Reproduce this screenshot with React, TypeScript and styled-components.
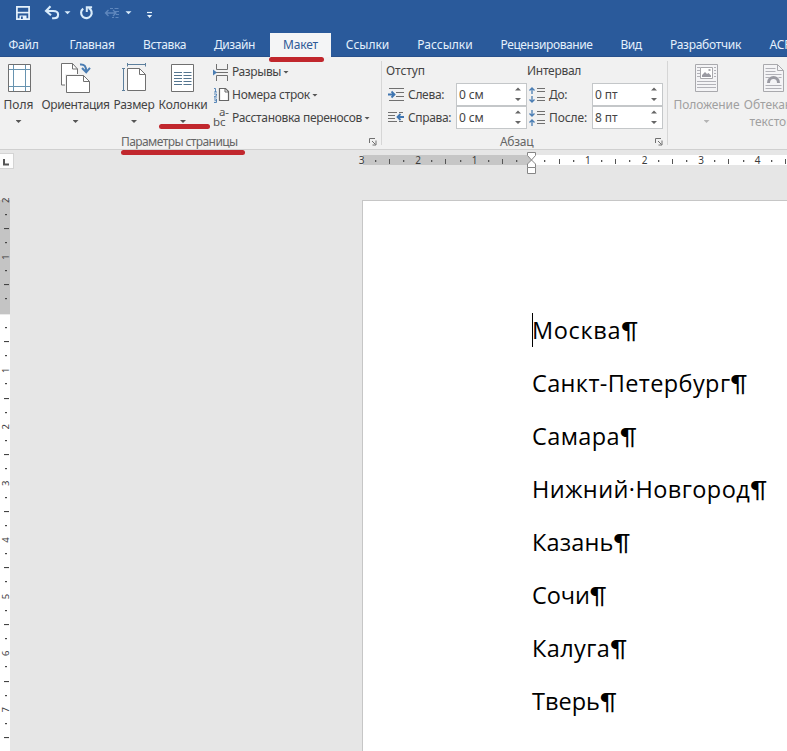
import React from "react";
import styled, { createGlobalStyle } from "styled-components";

const Global = createGlobalStyle`
  * { box-sizing: border-box; }
  body { margin: 0; overflow: hidden; background: #e6e6e6; }
  svg { display: block; flex: none; }
`;

const Window = styled.div`
  width: 787px;
  height: 751px;
  overflow: hidden;
  display: flex;
  flex-direction: column;
  background: #e6e6e6;
  color: #444;
  font: 12px/16px "Noto Sans", "Open Sans", sans-serif;
  white-space: nowrap;
`;

const QuickAccess = styled.div`
  height: 33px;
  flex: none;
  background: #2a5a9b;
`;

const TabBar = styled.nav`
  height: 24px;
  flex: none;
  display: flex;
  background: #2a5a9b;
  border-bottom: 1px solid #27508c;
`;

const Tab = styled.div<{ $w: number; $ls?: number; $pad?: number; $active?: boolean }>`
  position: relative;
  width: ${(p) => p.$w}px;
  flex: none;
  display: flex;
  justify-content: center;
  padding: 4px 0 0 ${(p) => p.$pad ?? 0}px;
  height: 24px;
  letter-spacing: ${(p) => p.$ls ?? 0}px;
  color: ${(p) => (p.$active ? "#2f5a96" : "#e4f0fc")};
  background: ${(p) => (p.$active ? "#f4f5f6" : "transparent")};
`;

const Marker = styled.i<{ $left: number; $top: number; $w: number }>`
  position: absolute;
  z-index: 2;
  left: ${(p) => p.$left}px;
  top: ${(p) => p.$top}px;
  width: ${(p) => p.$w}px;
  height: 5px;
  border-radius: 2.5px;
  background: #c1272d;
`;

const Ribbon = styled.div`
  height: 93px;
  flex: none;
  display: flex;
  background: #f1f1f1;
  border-bottom: 1px solid #d0d0d0;
`;

const Group = styled.section<{ $w: number }>`
  width: ${(p) => p.$w}px;
  flex: none;
  margin: 4px 0;
  border-right: 1px solid #d6d6d6;
  display: flex;
  flex-direction: column;
`;

const GroupBody = styled.div`
  height: 75px;
  flex: none;
  display: flex;
`;

const GroupFooter = styled.div<{ $pad: number; $ls: number }>`
  display: flex;
  justify-content: space-between;
  align-items: flex-start;
  padding: 1px 4px 0 ${(p) => p.$pad}px;
  height: 10px;
  line-height: 13px;
  color: #666;
  letter-spacing: ${(p) => p.$ls}px;
`;

const FooterName = styled.span`
  position: relative;
  margin-top: -2px;
`;

const BigButton = styled.div<{ $w: number; $ls?: number; $muted?: boolean }>`
  position: relative;
  width: ${(p) => p.$w}px;
  flex: none;
  display: flex;
  flex-direction: column;
  align-items: center;
  padding-top: 2px;
  letter-spacing: ${(p) => p.$ls ?? 0}px;
  color: ${(p) => (p.$muted ? "#a0a0a0" : "#444")};
`;

const BigLabel = styled.span`
  margin-top: 4px;
  height: 16px;
`;

const Caret = styled.i<{ $mt?: number; $color?: string }>`
  width: 6px;
  height: 3px;
  flex: none;
  margin-top: ${(p) => p.$mt ?? 0}px;
  background: ${(p) => p.$color ?? "#555"};
  clip-path: polygon(0 0, 100% 0, 50% 100%);
`;

const SmallColumn = styled.div`
  display: flex;
  flex-direction: column;
  padding-left: 1px;
`;

const SmallButton = styled.div<{ $ls: number }>`
  height: 23px;
  display: flex;
  align-items: center;
  gap: 2px;
  letter-spacing: ${(p) => p.$ls}px;
  padding-bottom: 1px;
`;

const SpacingColumn = styled.div<{ $w: number; $pad: number }>`
  width: ${(p) => p.$w}px;
  padding-left: ${(p) => p.$pad}px;
  flex: none;
  display: flex;
  flex-direction: column;
`;

const SpacingTitle = styled.div<{ $ls: number }>`
  height: 22px;
  padding-top: 2px;
  letter-spacing: ${(p) => p.$ls}px;
`;

const SpacingRow = styled.div`
  height: 23px;
  display: flex;
  align-items: center;
  padding-left: 2px;
`;

const SpacingLabel = styled.span<{ $w: number; $ls: number }>`
  width: ${(p) => p.$w}px;
  padding-left: 3px;
  letter-spacing: ${(p) => p.$ls}px;
`;

const Field = styled.div`
  width: 71px;
  height: 23px;
  display: flex;
  align-items: center;
  justify-content: space-between;
  padding: 0 5px 0 2px;
  background: #fff;
  border: 1px solid #c4c7c9;
  letter-spacing: -0.1px;
`;

const PageArea = styled.div`
  flex: 1;
  display: flex;
  flex-direction: column;
`;

const RulerRow = styled.div`
  height: 26px;
  display: flex;
  flex: none;
`;

const TabSelector = styled.div`
  width: 14px;
  height: 16px;
  flex: none;
  margin: 3px 343px 0 0;
  background: #fdfdfd;
  border: solid #d4d4d4;
  border-width: 1px 1px 1px 0;
`;

const Workspace = styled.div`
  flex: 1;
  display: flex;
`;

const Sheet = styled.main`
  width: 425px;
  flex: none;
  margin: 24px 0 0 352px;
  padding: 103px 0 0 169px;
  background: #fff;
  border: solid #c6c6c6;
  border-width: 1px 0 0 1px;
`;

const Line = styled.p<{ $ls: number }>`
  position: relative;
  margin: 0;
  height: 53px;
  color: #000;
  font: 23.5px/53px "Open Sans", "Noto Sans", sans-serif;
  letter-spacing: ${(p) => p.$ls}px;
`;

const Pilcrow = styled.span`
  font: 24px/20px Lato, sans-serif;
  letter-spacing: 0;
`;

const TextCursor = styled.i`
  position: absolute;
  left: 0;
  top: 9px;
  width: 1px;
  height: 34px;
  background: #000;
`;

const QuickIcons = () => (
  <svg width="170" height="33" viewBox="0 0 170 33" fill="none">
    <path d="M16.9 6.9h12.2v12.2H16.9z" stroke="#e6f2fc" strokeWidth="1.7" />
    <path d="M17 12.6h12" stroke="#e6f2fc" strokeWidth="1.6" />
    <path d="M19.500 15.500h7V19h-7z" fill="#e6f2fc" />
    <path d="M21 16.500h1.800V19H21z" fill="#2a5a9b" />
    <path d="M50.500 6.200 46 11l5 4.300M46.600 11h6.600c3 0 4.900 1.200 4.900 3.500 0 2.400-1.700 3.800-4 3.800h-2" stroke="#d9ecfb" strokeWidth="2.100" />
    <path d="M64.500 11.300h6l-3 3z" fill="#d9ecfb" />
    <path d="M83.200 8.600a5.300 5.300 0 1 0 5.400-.6" stroke="#d9ecfb" strokeWidth="2.100" />
    <path d="M86.800 12V7.200h5.300" stroke="#d9ecfb" strokeWidth="2" />
    <g stroke="#5f87bd">
      <path d="M110 8.500h3m1.500 0h4M112 17.500h2m1.500 0h3M115 11.500h4M116 14.500h3" />
      <path d="M105.500 13h10M108.500 10l-3 3 3 3M113 10l3 3-3 3" strokeWidth="1.300" />
    </g>
    <path d="M125.500 11.300h6l-3 3z" fill="#d9ecfb" />
    <path d="M147 12.500h5" stroke="#e6f2fc" strokeWidth="1.200" />
    <path d="M147 15h5.200l-2.600 3z" fill="#e6f2fc" />
  </svg>
);

const MarginsIcon = () => (
  <svg width="24" height="30" viewBox="0 0 24 30" fill="none">
    <path d="M1.500 1.500h22v27h-22z" fill="#fff" stroke="#707070" />
    <path d="M6.500 2v26M18.500 2v26M2 6.500h21M2 23.500h21" stroke="#6793b0" />
  </svg>
);

const OrientationIcon = () => (
  <svg width="32" height="30" viewBox="0 0 32 30" fill="none">
    <path d="M1.500.5h11l5 5.500v16h-16z" fill="#fff" stroke="#707070" />
    <path d="M12.500.5v5.500h5" stroke="#707070" />
    <path d="M6.500 12.500h17l6 6v11h-23z" fill="#fff" stroke="#f1f1f1" strokeWidth="3" />
    <path d="M6.500 12.500h17l6 6v11h-23z" fill="#fff" stroke="#707070" />
    <path d="M23.500 12.500v6h6" stroke="#707070" />
    <path d="M20 1.500c4.500-.5 6.200 2 6.200 7" stroke="#4a7db3" strokeWidth="2" />
    <path d="M22 5l4.200 4.200L30 4.800" stroke="#4a7db3" strokeWidth="2" />
  </svg>
);

const SizeIcon = () => (
  <svg width="26" height="30" viewBox="-1 0 26 30" fill="none">
    <path d="M5.500 1.500h18M5.500 0v3.500M23.500 0v3.500M1.500 5.500v22M0 5.500h3M0 27.500h3" stroke="#5c7f9d" />
    <path d="M5.500 5.500h12l6 6v16h-18z" fill="#fff" stroke="#707070" />
    <path d="M17.500 5.500v6h6" stroke="#707070" />
  </svg>
);

const ColumnsIcon = () => (
  <svg width="24" height="30" viewBox="0 0 24 30" fill="none">
    <path d="M.5 1.500h22v27H.5z" fill="#fff" stroke="#707070" />
    <path d="M3 9.500h8M3 12.500h8M3 15.500h8M3 18.500h8M3 21.500h8M12.500 9.500h8M12.500 12.500h8M12.500 15.500h8M12.500 18.500h8M12.500 21.500h8" stroke="#54758f" />
  </svg>
);

const BreaksIcon = () => (
  <svg width="17" height="17" viewBox="0 0 17 17" fill="none">
    <path d="M3.500 0v5.500h11V0M3.500 17v-5.500h11V17M3 8.500h12" stroke="#707070" />
    <path d="M0 5.500 4 8.500l-4 3z" fill="#4a7db3" />
  </svg>
);

const LineNumbersIcon = () => (
  <svg width="17" height="17" viewBox="0 0 17 17" fill="none">
    <path d="M6.500 1.500h6l3 3v9h-9z" fill="#fff" stroke="#666" strokeWidth="1.200" />
    <path d="M12 1.500v3.500h3.500" stroke="#666" />
    <path d="M1 1.500h1.500V5M1 5h3M1 7h2.500v1.500L1 10h3M1 12h2.500v3.500H1M1.500 13.700h2" stroke="#4a7db3" strokeWidth=".9" />
  </svg>
);

const Hyphen = styled.span`
  width: 17px;
  height: 22px;
  display: flex;
  flex-direction: column;
  color: #555;
  font-size: 11.500px;
  line-height: 10px;
  letter-spacing: -0.100px;
`;

const HyphenTop = styled.span`
  height: 10px;
  padding-left: 6px;
`;

const HyphenBottom = styled.span`
  height: 10px;
`;

const IndentLeftIcon = () => (
  <svg width="17" height="14" viewBox="0 0 17 14" fill="none">
    <path d="M1 .5h15M8 4.500h8M8 8.500h8M1 12.500h15" stroke="#707070" />
    <path d="M0 6.500h6M3.500 3.500l3 3-3 3" stroke="#3f75b0" strokeWidth="1.800" />
  </svg>
);

const IndentRightIcon = () => (
  <svg width="17" height="14" viewBox="0 0 17 14" fill="none">
    <path d="M0 1.500h9m2 0h4M0 4.500h7M0 7.500h7M0 10.500h9m2 0h4" stroke="#707070" />
    <path d="M16 6h-6M12.500 3l-3 3 3 3" stroke="#3f75b0" strokeWidth="1.800" />
  </svg>
);

const SpaceIcon = ({ after }: { after?: boolean }) => (
  <svg width="17" height="18" viewBox="0 0 17 18" fill="none">
    <path d="M8 2.500h8M8 5.500h8M8 11.500h8M8 14.500h8" stroke="#707070" />
    <path
      d={after ? "M3 1v6M.5 4.500 3 7l2.500-2.500M3 17v-6M.5 13.500 3 11l2.500 2.500" : "M3 8V2M.5 4.500 3 2l2.500 2.500M3 10v6M.5 13.500 3 16l2.500-2.500"}
      stroke="#4a7db3"
      strokeWidth="1.300"
    />
  </svg>
);

const Spinner = () => (
  <svg width="6" height="15" viewBox="0 0 6 15">
    <path d="M0 3.500h6L3 .5zM0 11h6l-3 3z" fill="#666" />
  </svg>
);

const LauncherIcon = () => (
  <svg width="8" height="9" viewBox="0 0 8 9" fill="none">
    <path d="M.5 6V1.500H6M3 4l3.500 3.500M7 3.500V8H3.500" stroke="#707070" />
  </svg>
);

const PositionIcon = () => (
  <svg width="24" height="30" viewBox="2 0 24 30" fill="none">
    <path d="M2.500 1.500h22v27h-22z" fill="#f4f4f6" stroke="#a9a9ad" />
    <path d="M4 4.500h3M4 7.500h3M4 10.500h3M4 13.500h3M21 4.500h2M21 7.500h2M21 10.500h2M21 13.500h2M4 18.500h19M4 21.500h19M4 24.500h19" stroke="#b2b2b8" />
    <path d="M7.500 4.500h12v11h-12z" fill="#fff" stroke="#a9a9ad" />
    <path d="M9 14v-2l3-3 2 2 1.500-1 2.500 2.500V14z" fill="#9a9aa2" />
    <path d="M15.500 6h2v2h-2z" fill="#a9a9ad" />
  </svg>
);

const WrapIcon = () => (
  <svg width="24" height="30" viewBox="0 0 24 30" fill="none">
    <path d="M.5 1.500h14l6 6v21H.5z" fill="#f4f4f6" stroke="#a9a9ad" />
    <path d="M14.500 1.500v6h6" stroke="#a9a9ad" />
    <path d="M2.500 5.500h10M2.500 8.500h10M2.500 11.500h16M2.500 14.500h4M15.500 14.500h3M2.500 22.500h16M2.500 25.500h16" stroke="#b2b2b8" />
    <path d="M5.500 20c0-7.500 10-7.500 10 0" stroke="#9a9aa2" strokeWidth="3" />
  </svg>
);

const WrapText = styled.span`
  margin: 1px 5px 0 0;
`;

const STEP = 56.6;
const quarters = (from: number, to: number) =>
  Array.from({ length: to - from + 1 }, (_, i) => from + i);

const HorizontalRuler = () => (
  <svg width="430" height="26" viewBox="357 150 430 26">
    <path d="M363 155h169v10H363z" fill="#c6c6c6" />
    <path d="M532 155h255v10H532z" fill="#fff" />
    {quarters(-12, 18).map((q) => {
      const x = 531.300 + (q * STEP) / 4;
      if (q === 0) return null;
      if (q % 4 === 0)
        return (
          <text key={q} x={x} y="164.200" fontSize="10" textAnchor="middle" fill="#3c3c3c">
            {Math.abs(q / 4)}
          </text>
        );
      return q % 2 === 0 ? (
        <rect key={q} x={Math.round(x) - 1} y="159" width="1" height="5" fill="#555" />
      ) : (
        <rect key={q} x={Math.round(x) - 1} y="160" width="1.300" height="2" fill="#555" />
      );
    })}
    <g fill="#fff" stroke="#868686">
      <path d="M527.500 152.500h8v3l-4 4.500-4-4.500z" />
      <path d="M527.500 167.500v-3.500l4-4 4 4v3.500z" />
      <path d="M527.500 167.500h8v6h-8z" />
    </g>
  </svg>
);

const VerticalRuler = () => (
  <svg width="10" height="575" viewBox="0 176 10 575">
    <path d="M0 200h10v114.500H0z" fill="#c4c4c4" />
    <path d="M0 314.500h10V751H0z" fill="#fff" />
    {quarters(-8, 30).map((q) => {
      const y = 313.600 + (q * STEP) / 4;
      if (q === 0) return null;
      if (q % 4 === 0)
        return (
          <text key={q} transform={`translate(8.800 ${y}) rotate(-90)`} fontSize="9.500" textAnchor="middle" fill="#3c3c3c">
            {Math.abs(q / 4)}
          </text>
        );
      return q % 2 === 0 ? (
        <rect key={q} x="4" y={Math.round(y) - 1} width="5" height="1.100" fill="#444" />
      ) : (
        <rect key={q} x="5" y={Math.round(y) - 1} width="2" height="1.200" fill="#444" />
      );
    })}
  </svg>
);

const cities: [string, number][] = [
  ["Москва", 0.65],
  ["Санкт-Петербург", 0.38],
  ["Самара", 0.4],
  ["Нижний·Новгород", 0.43],
  ["Казань", 0.15],
  ["Сочи", -0.1],
  ["Калуга", 0.4],
  ["Тверь", 0],
];

export default function App() {
  return (
    <Window>
      <Global />
      <QuickAccess>
        <QuickIcons />
      </QuickAccess>
      <TabBar>
        <Tab $w={47} $ls={-0.25}>Файл</Tab>
        <Tab $w={90} $ls={-0.3}>Главная</Tab>
        <Tab $w={55} $ls={-0.35}>Вставка</Tab>
        <Tab $w={78} $ls={-0.43} $pad={7}>Дизайн</Tab>
        <Tab $w={61} $ls={-0.15} $active>
          Макет
          <Marker $left={-1} $top={24} $w={55} />
        </Tab>
        <Tab $w={73}>Ссылки</Tab>
        <Tab $w={82}>Рассылки</Tab>
        <Tab $w={121} $ls={-0.4}>Рецензирование</Tab>
        <Tab $w={48} $ls={-0.5}>Вид</Tab>
        <Tab $w={101} $ls={-0.28}>Разработчик</Tab>
        <Tab $w={66} $ls={-0.1}>ACROB</Tab>
      </TabBar>
      <Ribbon>
        <Group $w={382}>
          <GroupBody>
            <BigButton $w={37}>
              <MarginsIcon />
              <BigLabel>Поля</BigLabel>
              <Caret $mt={7} />
            </BigButton>
            <BigButton $w={77} $ls={-0.38}>
              <OrientationIcon />
              <BigLabel>Ориентация</BigLabel>
              <Caret $mt={7} />
            </BigButton>
            <BigButton $w={40} $ls={-0.27}>
              <SizeIcon />
              <BigLabel>Размер</BigLabel>
              <Caret $mt={7} />
            </BigButton>
            <BigButton $w={58} $ls={-0.1}>
              <ColumnsIcon />
              <BigLabel>Колонки</BigLabel>
              <Caret $mt={7} />
              <Marker $left={5} $top={63} $w={51} />
            </BigButton>
            <SmallColumn>
              <SmallButton $ls={-0.4}>
                <BreaksIcon />
                <span>Разрывы</span>
                <Caret />
              </SmallButton>
              <SmallButton $ls={-0.28}>
                <LineNumbersIcon />
                <span>Номера строк</span>
                <Caret />
              </SmallButton>
              <SmallButton $ls={-0.32}>
                <Hyphen>
                  <HyphenTop>a-</HyphenTop>
                  <HyphenBottom>bc</HyphenBottom>
                </Hyphen>
                <span>Расстановка переносов</span>
                <Caret />
              </SmallButton>
            </SmallColumn>
          </GroupBody>
          <GroupFooter $pad={121} $ls={-0.58}>
            <FooterName>
              Параметры страницы
              <Marker $left={0} $top={15} $w={124} />
            </FooterName>
            <LauncherIcon />
          </GroupFooter>
        </Group>
        <Group $w={286}>
          <GroupBody>
            <SpacingColumn $w={145} $pad={4}>
              <SpacingTitle $ls={-0.1}>Отступ</SpacingTitle>
              <SpacingRow>
                <IndentLeftIcon />
                <SpacingLabel $w={51} $ls={-0.3}>Слева:</SpacingLabel>
                <Field>0 см<Spinner /></Field>
              </SpacingRow>
              <SpacingRow>
                <IndentRightIcon />
                <SpacingLabel $w={51} $ls={-0.35}>Справа:</SpacingLabel>
                <Field>0 см<Spinner /></Field>
              </SpacingRow>
            </SpacingColumn>
            <SpacingColumn $w={140} $pad={0}>
              <SpacingTitle $ls={-0.28}>Интервал</SpacingTitle>
              <SpacingRow>
                <SpaceIcon />
                <SpacingLabel $w={46} $ls={-0.3}>До:</SpacingLabel>
                <Field>0 пт<Spinner /></Field>
              </SpacingRow>
              <SpacingRow>
                <SpaceIcon after />
                <SpacingLabel $w={46} $ls={-0.1}>После:</SpacingLabel>
                <Field>8 пт<Spinner /></Field>
              </SpacingRow>
            </SpacingColumn>
          </GroupBody>
          <GroupFooter $pad={118} $ls={-0.3}>
            <FooterName>Абзац</FooterName>
            <LauncherIcon />
          </GroupFooter>
        </Group>
        <Group $w={160}>
          <GroupBody>
            <BigButton $w={77} $ls={-0.1} $muted>
              <PositionIcon />
              <BigLabel>Положение</BigLabel>
              <Caret $mt={7} $color="#b4b4b4" />
            </BigButton>
            <BigButton $w={60} $muted>
              <WrapIcon />
              <BigLabel>Обтекание</BigLabel>
              <WrapText>текстом</WrapText>
            </BigButton>
          </GroupBody>
        </Group>
      </Ribbon>
      <PageArea>
        <RulerRow>
          <TabSelector>
            <svg width="12" height="14" viewBox="0 0 12 14" fill="none">
              <path d="M4 5v5.500h5" stroke="#555" strokeWidth="2" />
            </svg>
          </TabSelector>
          <HorizontalRuler />
        </RulerRow>
        <Workspace>
          <VerticalRuler />
          <Sheet>
            {cities.map(([name, ls], i) => (
              <Line key={name} $ls={ls}>
                {i === 0 && <TextCursor />}
                {name}
                <Pilcrow>¶</Pilcrow>
              </Line>
            ))}
          </Sheet>
        </Workspace>
      </PageArea>
    </Window>
  );
}
